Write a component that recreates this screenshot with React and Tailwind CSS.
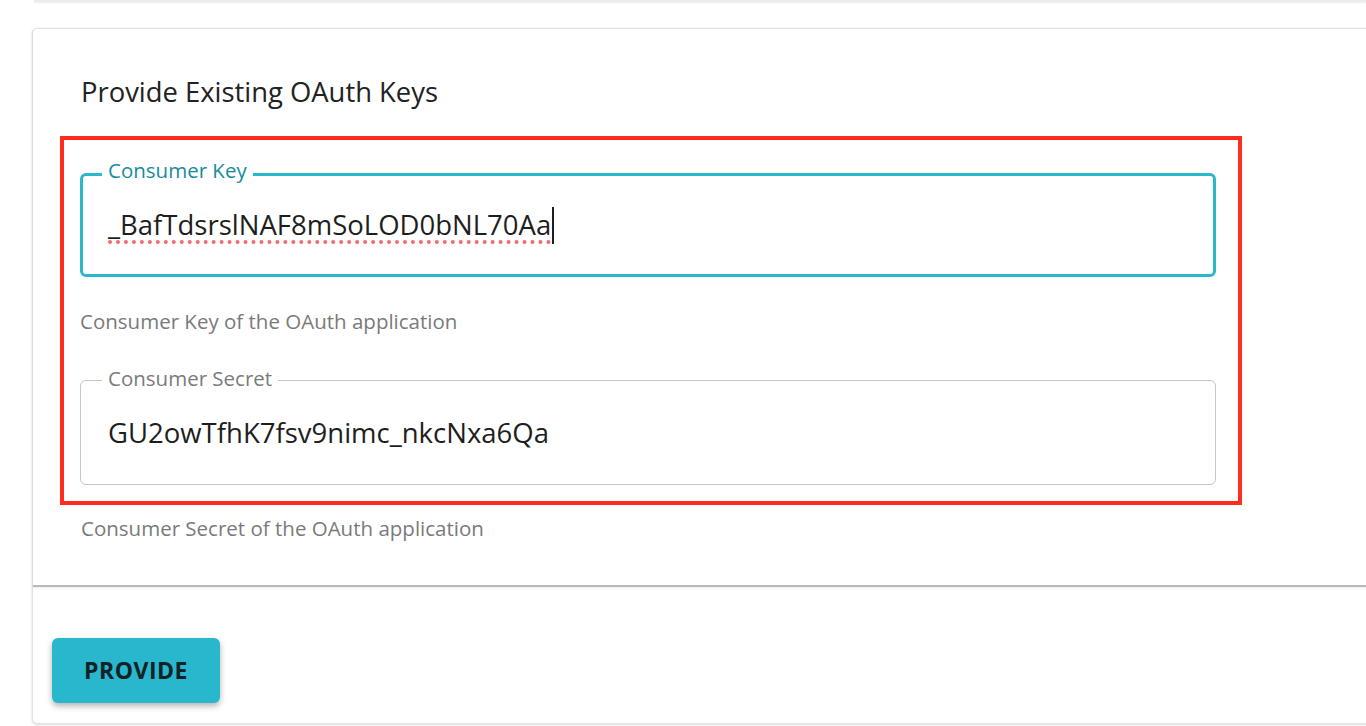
import React from "react";

const font = { fontFamily: '"Open Sans", "Liberation Sans", sans-serif' };

function OutlinedField({ label, value, focused, spell }) {
  return (
    <div
      className={
        focused
          ? "relative flex h-[104px] items-center rounded-[6px] border-[3px] border-[#2bb8cc] pl-[25px]"
          : "relative flex h-[105px] items-center rounded-[6px] border border-[#c6c6c6] pl-[27px]"
      }
    >
      <span
        className={
          focused
            ? "absolute -top-[19px] left-[19px] bg-white px-[6px] text-[20.5px] leading-[26px] text-[#178c9c]"
            : "absolute -top-[16px] left-[21px] bg-white px-[6px] text-[20.5px] leading-[26px] text-[#7b7b7b]"
        }
      >
        {label}
      </span>
      <div className="flex items-center text-[27.5px] leading-[36px] text-[#1e1e1e]">
        <span
          className={
            spell
              ? "underline decoration-dotted decoration-[#f26a72] decoration-[4px] underline-offset-[5px]"
              : ""
          }
        >
          {value}
        </span>
        {focused && <span className="ml-[1px] inline-block h-[37px] w-[2px] bg-[#1e1e1e]" />}
      </div>
    </div>
  );
}

export default function App() {
  return (
    <div className="h-[726px] w-[1366px] overflow-hidden bg-white" style={font}>
      <div className="ml-[34px] h-[2px] bg-[#ececec] shadow-[0_1px_2px_rgba(0,0,0,0.08)]" />
      <div className="ml-[32px] mt-[26px] w-[1400px] rounded-[5px] border border-[#e2e2e2] bg-white shadow-[0_1px_3px_rgba(0,0,0,0.15)]">
        <div className="border-b-2 border-[#b9b9b9] pb-[45px] pl-[48px] pt-[47px] shadow-[0_1px_2px_rgba(0,0,0,0.08)]">
          <h2 className="text-[27.4px] leading-[32px] text-[#222]">Provide Existing OAuth Keys</h2>
          <div className="-ml-[21px] mt-[28px] w-[1182px] border-4 border-[#ff2b1f] pb-[16px] pl-[16px] pr-[22px] pt-[33px]">
            <OutlinedField label="Consumer Key" value="_BafTdsrslNAF8mSoLOD0bNL70Aa" focused spell />
            <div className="mt-[32px] text-[20.5px] leading-[24px] text-[#7a7a7a]">
              Consumer Key of the OAuth application
            </div>
            <div className="mt-[47px]">
              <OutlinedField label="Consumer Secret" value="GU2owTfhK7fsv9nimc_nkcNxa6Qa" />
            </div>
          </div>
          <div className="mt-[11px] text-[20.5px] leading-[24px] text-[#7a7a7a]">
            Consumer Secret of the OAuth application
          </div>
        </div>
        <div className="pb-[20px] pl-[19px] pt-[51px]">
          <button className="h-[65px] w-[168px] rounded-[6px] bg-[#29b7cd] text-[23px] font-bold tracking-[0.5px] text-[#0e2328] shadow-[0_3px_6px_rgba(0,0,0,0.3)]">
            PROVIDE
          </button>
        </div>
      </div>
    </div>
  );
}
